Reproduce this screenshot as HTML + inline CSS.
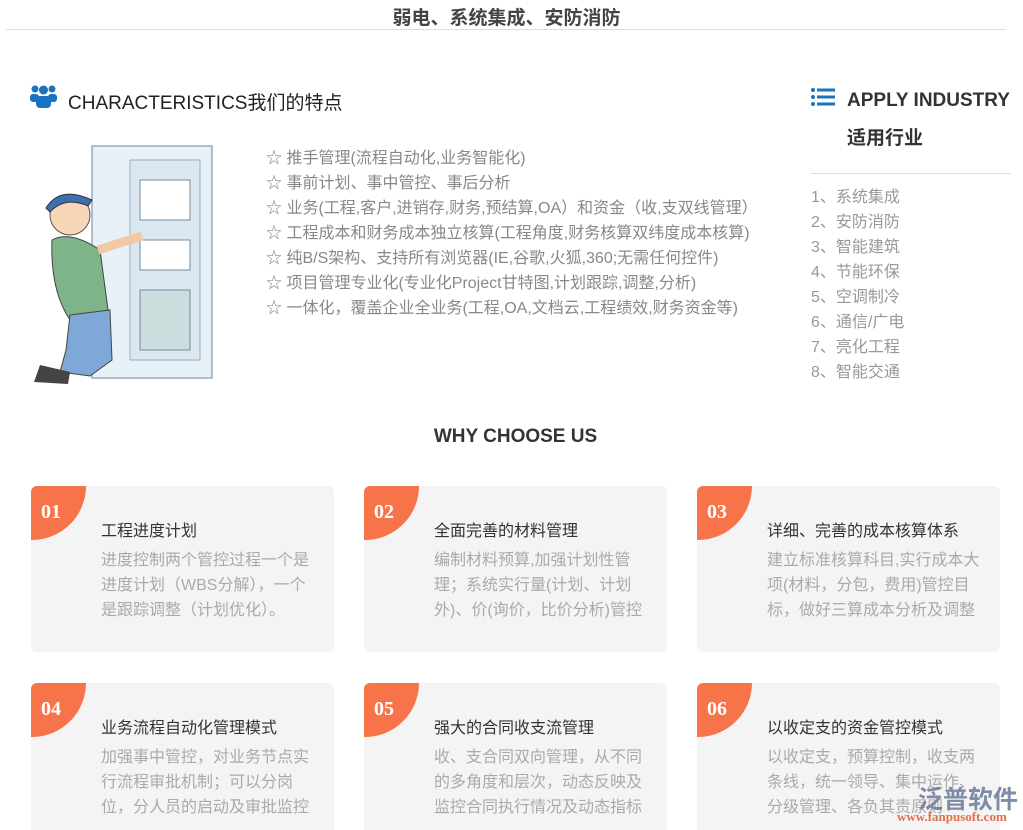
<!DOCTYPE html>
<html><head><meta charset="utf-8"><style>
*{margin:0;padding:0;box-sizing:border-box}
html,body{width:1023px;height:830px;overflow:hidden}
body{background:#fff;font-family:"Liberation Sans","Noto Sans CJK SC",sans-serif;position:relative}
.a{position:absolute;white-space:nowrap}
.hd{left:0;width:1013px;text-align:center;top:3px;font-size:19px;font-weight:bold;color:#444}
.hl{left:6px;top:29px;width:1000px;height:1px;background:#ddd}
.feat{left:266px;font-size:16px;color:#888;line-height:25px;top:146px}
.ind{left:811px;top:185px;font-size:16px;color:#999;line-height:25px}
.card{position:absolute;width:303px;height:166px;background:#f4f4f4;border-radius:6px;overflow:hidden}
.card .n{position:absolute;left:0;top:0;width:55px;height:54px;background:#f7744a;border-bottom-right-radius:55px}
.card .n span{position:absolute;left:10px;top:15px;color:#fff;font:bold 20px "Liberation Serif",serif}
.card .t{position:absolute;left:70px;top:31px;font-size:16px;color:#333}
.card .d{position:absolute;left:70px;top:62px;width:218px;font-size:16px;color:#aaa;line-height:25px;white-space:normal}
</style></head><body>
<div class="a hd">弱电、系统集成、安防消防</div>
<div class="a hl"></div>
<svg class="a" style="left:30px;top:84px" width="27" height="24" viewBox="0 0 27 24"><g fill="#1a73c0"><circle cx="5" cy="5" r="3.5"/><circle cx="22" cy="5" r="3.5"/><circle cx="13.5" cy="6" r="4.5"/><rect x="0" y="10" width="9" height="8" rx="3"/><rect x="18" y="10" width="9" height="8" rx="3"/><rect x="6" y="12" width="15" height="12" rx="4"/></g></svg>
<div class="a" style="left:68px;top:88px;font-size:19px;color:#222">CHARACTERISTICS我们的特点</div>
<svg class="a" style="left:30px;top:140px" width="212" height="246" viewBox="0 0 212 246">
<rect x="62" y="6" width="120" height="232" fill="#e8f1f7" stroke="#9ab" stroke-width="1.5"/>
<rect x="100" y="20" width="70" height="200" fill="#dbe8f1" stroke="#9ab"/>
<rect x="110" y="40" width="50" height="40" fill="#fff" stroke="#789"/>
<rect x="110" y="100" width="50" height="30" fill="#fff" stroke="#789"/>
<rect x="110" y="150" width="50" height="60" fill="#cdd" stroke="#789"/>
<circle cx="40" cy="75" r="20" fill="#f7d7b8" stroke="#555"/>
<path d="M16 68 Q30 45 62 60 L58 66 Q35 56 20 72Z" fill="#3d6fb0" stroke="#333"/>
<path d="M22 100 Q40 90 70 110 L78 170 L40 180 Q20 150 22 100Z" fill="#7fb48a" stroke="#444"/>
<path d="M40 175 L80 170 L82 220 L60 236 L30 232 L36 210Z" fill="#7fa8d8" stroke="#444"/>
<path d="M10 225 L40 232 L38 244 L4 242Z" fill="#444"/>
<path d="M68 110 L112 96" stroke="#f2c9a4" stroke-width="9"/>
</svg>
<div class="a feat">☆ 推手管理(流程自动化,业务智能化)<br>☆ 事前计划、事中管控、事后分析<br>☆ 业务(工程,客户,进销存,财务,预结算,OA）和资金（收,支双线管理）<br>☆ 工程成本和财务成本独立核算(工程角度,财务核算双纬度成本核算)<br>☆ 纯B/S架构、支持所有浏览器(IE,谷歌,火狐,360;无需任何控件)<br>☆ 项目管理专业化(专业化Project甘特图,计划跟踪,调整,分析)<br>☆ 一体化，覆盖企业全业务(工程,OA,文档云,工程绩效,财务资金等)</div>
<svg class="a" style="left:811px;top:88px" width="24" height="18" viewBox="0 0 24 18"><g fill="#1a73c0"><circle cx="2" cy="2" r="2"/><circle cx="2" cy="9" r="2"/><circle cx="2" cy="16" r="2"/><rect x="6" y="0.5" width="18" height="3"/><rect x="6" y="7.5" width="18" height="3"/><rect x="6" y="14.5" width="18" height="3"/></g></svg>
<div class="a" style="left:847px;top:90px;font-size:19px;font-weight:bold;color:#333">APPLY INDUSTRY</div>
<div class="a" style="left:847px;top:123px;font-size:19px;font-weight:bold;color:#333">适用行业</div>
<div class="a" style="left:811px;top:173px;width:200px;height:1px;background:#ddd"></div>
<div class="a ind">1、系统集成<br>2、安防消防<br>3、智能建筑<br>4、节能环保<br>5、空调制冷<br>6、通信/广电<br>7、亮化工程<br>8、智能交通</div>
<div class="a" style="left:0;width:1031px;text-align:center;top:426px;font-size:19px;font-weight:bold;color:#333">WHY CHOOSE US</div>
<div class="card" style="left:31px;top:486px"><div class="n"><span>01</span></div><div class="t">工程进度计划</div><div class="d">进度控制两个管控过程一个是进度计划（WBS分解），一个是跟踪调整（计划优化）。</div></div>
<div class="card" style="left:364px;top:486px"><div class="n"><span>02</span></div><div class="t">全面完善的材料管理</div><div class="d">编制材料预算,加强计划性管理；系统实行量(计划、计划外)、价(询价，比价分析)管控</div></div>
<div class="card" style="left:697px;top:486px"><div class="n"><span>03</span></div><div class="t">详细、完善的成本核算体系</div><div class="d">建立标准核算科目,实行成本大项(材料，分包，费用)管控目标，做好三算成本分析及调整</div></div>
<div class="card" style="left:31px;top:683px"><div class="n"><span>04</span></div><div class="t">业务流程自动化管理模式</div><div class="d">加强事中管控，对业务节点实行流程审批机制；可以分岗位，分人员的启动及审批监控</div></div>
<div class="card" style="left:364px;top:683px"><div class="n"><span>05</span></div><div class="t">强大的合同收支流管理</div><div class="d">收、支合同双向管理，从不同的多角度和层次，动态反映及监控合同执行情况及动态指标</div></div>
<div class="card" style="left:697px;top:683px"><div class="n"><span>06</span></div><div class="t">以收定支的资金管控模式</div><div class="d">以收定支，预算控制，收支两条线，统一领导、集中运作、分级管理、各负其责原则</div></div>
<div class="a" style="left:918px;top:780px;font-size:25px;font-weight:bold;color:#6a7a99;opacity:.85">泛普软件</div>
<div class="a" style="left:897px;top:809px;font:bold 13px 'Liberation Serif',serif;color:#e07050">www.fanpusoft.com</div>
</body></html>
